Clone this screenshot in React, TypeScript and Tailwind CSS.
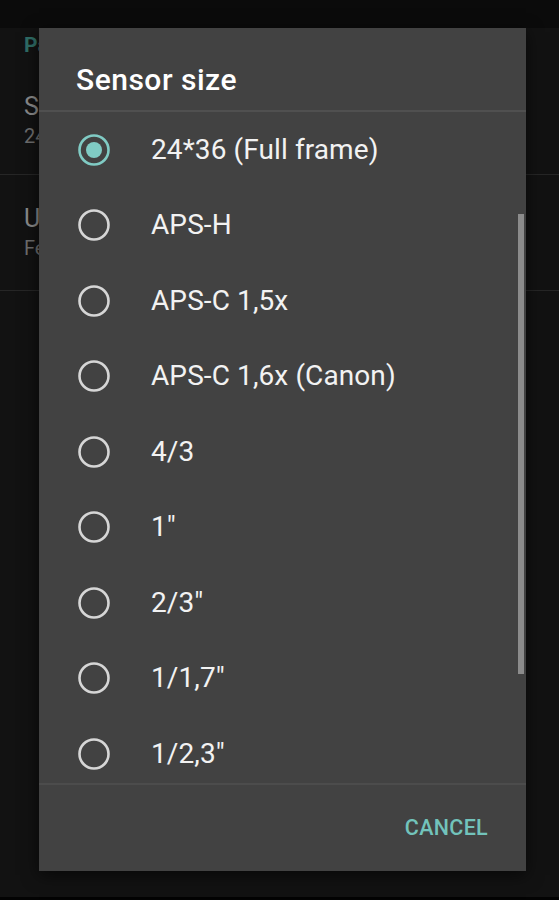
import React from "react";

const options = [
  "24*36 (Full frame)",
  "APS-H",
  "APS-C 1,5x",
  "APS-C 1,6x (Canon)",
  "4/3",
  "1\"",
  "2/3\"",
  "1/1,7\"",
  "1/2,3\"",
];

function Radio({ checked }: { checked: boolean }) {
  return (
    <svg width="34" height="34" viewBox="0 0 34 34" className="shrink-0">
      <circle
        cx="17"
        cy="17"
        r="14.5"
        fill="none"
        stroke={checked ? "#80cbc4" : "#d6d6d6"}
        strokeWidth="2.6"
      />
      {checked && <circle cx="17" cy="17" r="8" fill="#80cbc4" />}
    </svg>
  );
}

export default function App() {
  const selected = 0;

  return (
    <div
      className="relative w-[559px] h-[900px] overflow-hidden bg-[#121212]"
      style={{ fontFamily: "Roboto, 'Noto Sans', sans-serif" }}
    >
      {/* status bar */}
      <div className="h-[28px] bg-[#0b0b0b]" />

      {/* preference screen behind the dialog, dimmed */}
      <div className="flex flex-col">
        <div className="px-[24px] pt-[2px] h-[40px] text-[21px] font-bold text-[#2f6d66]">
          Parameters
        </div>
        <div className="flex flex-col justify-center px-[24px] h-[107px] border-b border-[#262626]">
          <span className="text-[25px] leading-[30px] text-[#8a8a8a]">Sensor size</span>
          <span className="text-[20px] leading-[28px] text-[#6e6e6e]">24*36 (Full frame)</span>
        </div>
        <div className="flex flex-col justify-center px-[24px] h-[116px] border-b border-[#262626]">
          <span className="text-[25px] leading-[30px] text-[#8a8a8a]">Units</span>
          <span className="text-[20px] leading-[28px] text-[#6e6e6e]">Feet</span>
        </div>
      </div>

      <div className="absolute bottom-0 left-0 right-0 h-[3px] bg-[#030303]" />

      {/* dialog */}
      <div className="absolute left-[39px] top-[28px] w-[487px] h-[843px] bg-[#424242] flex flex-col shadow-[0_4px_16px_rgba(0,0,0,0.6)]">
        <div className="h-[84px] flex items-end pb-[12px] px-[37px] border-b-2 border-[#505050] shrink-0">
          <span className="text-[30px] leading-[36px] font-medium text-white tracking-[0.5px]">
            Sensor size
          </span>
        </div>

        <div className="relative flex-1 overflow-hidden">
          <div className="flex flex-col">
            {options.map((o, i) => (
              <div key={o} className="h-[75.5px] shrink-0 flex items-center pl-[38px]">
                <Radio checked={i === selected} />
                <span className="ml-[40px] text-[28px] text-[#f2f2f2] tracking-[0.1px]">{o}</span>
              </div>
            ))}
          </div>
          <div className="absolute right-[2px] top-[102px] w-[6px] h-[460px] bg-[#8c8c8c]" />
        </div>

        <div className="h-[88px] shrink-0 border-t-2 border-[#4c4c4c] flex items-center justify-end pr-[38px]">
          <span className="text-[21.5px] font-medium text-[#72c3bb] tracking-[0.3px]">CANCEL</span>
        </div>
      </div>
    </div>
  );
}
